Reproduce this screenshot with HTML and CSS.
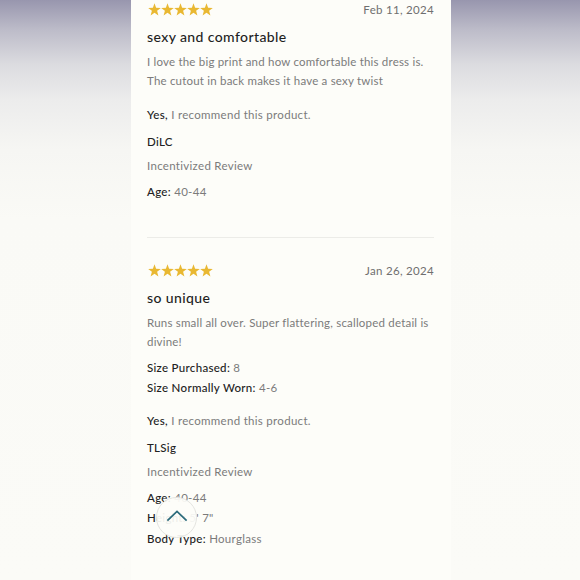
FILE: index.html
```html
<!DOCTYPE html>
<html lang="en">
<head>
<meta charset="utf-8">
<title>Reviews</title>
<link rel="stylesheet" href="styles.css">
</head>
<body>
<main class="panel">
  <article class="review">
    <div class="review-head">
      <svg class="stars" viewBox="0 0 65 14" width="65" height="14" aria-label="5 stars">
        <defs><polygon id="st" points="6.5,0.3 8.1,4.8 12.8,4.9 9.1,7.8 10.4,12.4 6.5,9.7 2.6,12.4 3.9,7.8 0.2,4.9 4.9,4.8"/></defs>
        <use href="#st" x="0"/><use href="#st" x="13"/><use href="#st" x="26"/><use href="#st" x="39"/><use href="#st" x="52"/>
      </svg>
      <span class="date">Feb 11, 2024</span>
    </div>
    <h2 class="title">sexy and comfortable</h2>
    <p class="text">I love the big print and how comfortable this dress is. The cutout in back makes it have a sexy twist</p>
    <p class="line yes"><b>Yes,</b> I recommend this product.</p>
    <p class="line name">DiLC</p>
    <p class="line incent">Incentivized Review</p>
    <p class="line attr-first"><b>Age:</b> 40-44</p>
  </article>
  <hr class="divider">
  <article class="review">
    <div class="review-head">
      <svg class="stars" viewBox="0 0 65 14" width="65" height="14" aria-label="5 stars">
        <use href="#st" x="0"/><use href="#st" x="13"/><use href="#st" x="26"/><use href="#st" x="39"/><use href="#st" x="52"/>
      </svg>
      <span class="date">Jan 26, 2024</span>
    </div>
    <h2 class="title">so unique</h2>
    <p class="text">Runs small all over. Super flattering, scalloped detail is divine!</p>
    <div class="attrs">
      <p class="line"><b>Size Purchased:</b> 8</p>
      <p class="line"><b>Size Normally Worn:</b> 4-6</p>
    </div>
    <p class="line yes yes2"><b>Yes,</b> I recommend this product.</p>
    <p class="line name">TLSig</p>
    <p class="line incent">Incentivized Review</p>
    <p class="line attr-first"><b>Age:</b> 40-44</p>
    <p class="line"><b>Height:</b> 5' 7"</p>
    <p class="line attr-last"><b>Body Type:</b> Hourglass</p>
  </article>
  <button class="to-top" aria-label="Back to top">
    <svg viewBox="0 0 24 13" width="22" height="12"><polyline points="1.5,11.5 12,1.5 22.5,11.5" fill="none" stroke="#2c6b7b" stroke-width="1.9"/></svg>
  </button>
</main>
</body>
</html>
```
FILE: styles.css
```css
html, body {
  margin: 0;
  padding: 0;
}
body {
  height: 580px;
  overflow: hidden;
  background: linear-gradient(to bottom, #9896ae 0px, #bdbcc9 30px, #dcdce0 65px, #ececec 100px, #f6f6f3 150px, #fafaf6 220px, #fbfbf7 100%);
  font-family: "Lato", "Open Sans", sans-serif;
}
.panel {
  position: relative;
  width: 320px;
  height: 580px;
  margin-left: 131px;
  background: #fdfdf9;
  padding: 0 17px 0 16px;
  box-sizing: border-box;
}
.review {
  display: flex;
  flex-direction: column;
}
.review-head {
  display: flex;
  justify-content: space-between;
  align-items: center;
  height: 20px;
}
.stars {
  fill: #e9b832;
  display: block;
  margin-left: 1px;
}
.date {
  font-size: 11.5px;
  color: #6f6f6f;
  letter-spacing: 0.3px;
  margin-top: -1px;
}
.title {
  margin: 7px 0 0;
  font-size: 14px;
  line-height: 20px;
  font-weight: 500;
  color: #1f1f1f;
  letter-spacing: 0.4px;
}
.text {
  margin: 5px 0 0;
  font-size: 11.5px;
  line-height: 19px;
  color: #7b7b7b;
  letter-spacing: 0.2px;
}
.line {
  margin: 0;
  font-size: 11.5px;
  line-height: 20px;
  color: #7b7b7b;
  letter-spacing: 0.3px;
}
.line b {
  font-weight: 500;
  color: #222;
}
.attrs {
  margin-top: 7px;
}
.yes { margin-top: 15px; }
.yes2 { margin-top: 13px; }
.name {
  margin-top: 7px;
  color: #222;
  font-weight: 500;
}
.incent { margin-top: 4px; }
.attr-first { margin-top: 6px; }
.attr-last { margin-top: 1px; }
.divider {
  margin: 35px 0 23px;
  border: 0;
  border-top: 1px solid #ecece8;
  height: 0;
}
.to-top {
  position: absolute;
  left: 25px;
  top: 497px;
  width: 41px;
  height: 41px;
  border-radius: 50%;
  border: 1px solid #e4e4e0;
  background: rgba(253, 253, 249, 0.93);
  display: flex;
  align-items: center;
  justify-content: center;
  padding: 0;
}
.to-top svg { display: block; margin-top: -3px; }
```
